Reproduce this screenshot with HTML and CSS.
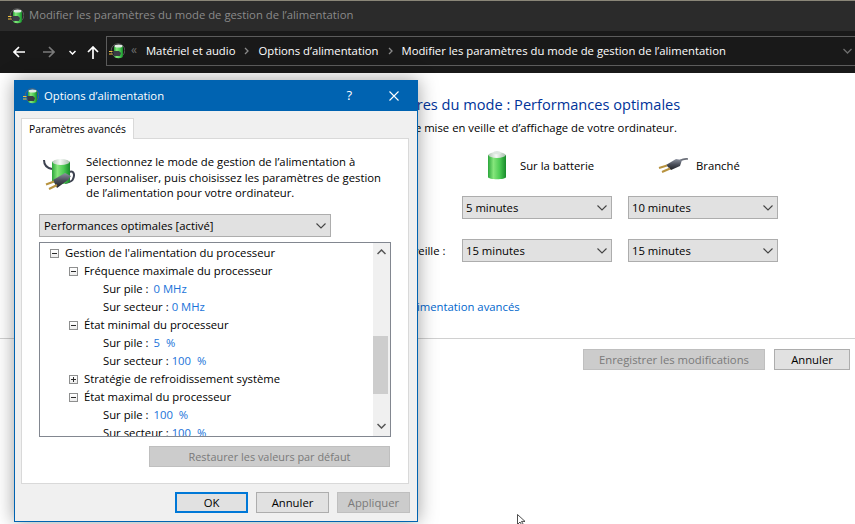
FILE: index.html
```html
<!DOCTYPE html>
<html lang="fr">
<head>
<meta charset="utf-8">
<title>Options d'alimentation</title>
<link rel="stylesheet" href="styles.css">
</head>
<body>
<svg class="defs" width="0" height="0" aria-hidden="true">
  <defs>
    <linearGradient id="cell" x1="0" x2="1" y1="0" y2="0">
      <stop offset="0" stop-color="#2aa63a"/><stop offset=".3" stop-color="#86e67c"/><stop offset=".65" stop-color="#4ccb54"/><stop offset="1" stop-color="#178a2a"/>
    </linearGradient>
    <linearGradient id="cap" x1="0" x2="1" y1="0" y2="0">
      <stop offset="0" stop-color="#b4c8b8"/><stop offset=".45" stop-color="#f6f9f6"/><stop offset="1" stop-color="#a9bfae"/>
    </linearGradient>
    <linearGradient id="plugbody" x1="0" x2="0" y1="0" y2="1">
      <stop offset="0" stop-color="#8d93a0"/><stop offset=".5" stop-color="#4a4e59"/><stop offset="1" stop-color="#1f2026"/>
    </linearGradient>
    <symbol id="battery" viewBox="0 0 20 30">
      <path d="M1 5.500C1 3 19 3 19 5.500V27c0 3-18 3-18 0z" fill="url(#cell)"/>
      <ellipse cx="10" cy="5" rx="8.500" ry="3" fill="url(#cap)"/>
      <path d="M6 3.200c0-3 8-3 8 0 0 1.400-8 1.400-8 0z" fill="#dfe7e1"/>
    </symbol>
    <symbol id="plug" viewBox="0 0 30 16">
      <path d="M22 3.500C25 2 27 1.500 30 2" fill="none" stroke="#6a6e78" stroke-width="1.700"/>
      <path d="M8 8 18 2 24 3 22 9 13 13z" fill="url(#plugbody)"/>
      <path d="M9 8.500 1 11" stroke="#b8933f" stroke-width="2"/>
      <path d="M12 11.500 4 15" stroke="#b8933f" stroke-width="2"/>
    </symbol>
    <symbol id="batteryplug" viewBox="0 0 32 34">
      <path d="M1 3c0 5 3 8 8 9" fill="none" stroke="#3d4250" stroke-width="2"/>
      <path d="M26 15c5-2 6 3 4 7-1 3-4 3-8 4" fill="none" stroke="#3d4250" stroke-width="2"/>
      <path d="M9 5.500C9 2 27 2 27 5.500V24c0 4-18 4-18 0z" fill="url(#cell)"/>
      <ellipse cx="18" cy="5" rx="8.500" ry="3" fill="url(#cap)"/>
      <path d="M10 23 22 16 28 19 25 23 14 31z" fill="url(#plugbody)"/>
      <path d="M11 24.500 3 27.500" stroke="#b8933f" stroke-width="2"/>
      <path d="M14 28 6 32" stroke="#b8933f" stroke-width="2"/>
    </symbol>
    <symbol id="smallicon" viewBox="0 0 16 16">
      <circle cx="9" cy="7.500" r="6.800" fill="none" stroke="#666" stroke-width=".8"/>
      <path d="M5 4C5 2 14 2 14 4V13c0 3-9 3-9 0z" fill="url(#cell)"/>
      <ellipse cx="9.500" cy="3" rx="4" ry="1.500" fill="#e4ece6"/>
      <path d="M4 8h6l2 2-1 3H5z" fill="#3b3d45"/>
      <path d="M0 8.500h3.500M0 11h3.500" stroke="#f0c040" stroke-width="1.100"/>
    </symbol>
  </defs>
</svg>

<div class="window">
  <header class="titlebar">
    <svg class="icon16"><use href="#smallicon"/></svg>
    <span class="titlebar-text">Modifier les paramètres du mode de gestion de l’alimentation</span>
  </header>
  <nav class="navbar">
    <div class="navbtns">
      <svg class="nav-back" width="12" height="12" viewBox="0 0 12 12"><path d="M6 1 1 6l5 5M1 6h11" fill="none" stroke="#fff" stroke-width="1.700"/></svg>
      <svg class="nav-fwd" width="12" height="12" viewBox="0 0 12 12"><path d="M6 1l5 5-5 5M11 6H0" fill="none" stroke="#7a7a7a" stroke-width="1.700"/></svg>
      <svg class="nav-drop" width="7" height="5" viewBox="0 0 7 5"><path d="M.5 1 3.500 4l3-3" fill="none" stroke="#fff" stroke-width="1.500"/></svg>
      <svg class="nav-up" width="12" height="13" viewBox="0 0 12 13"><path d="M1 6l5-5 5 5M6 1v12" fill="none" stroke="#fff" stroke-width="1.700"/></svg>
    </div>
    <div class="addressbox">
      <svg class="icon16"><use href="#smallicon"/></svg>
      <span class="crumb-more">«</span>
      <span class="crumb">Matériel et audio</span>
      <svg class="crumb-sep" width="5" height="8" viewBox="0 0 5 8"><path d="M1 1l3 3-3 3" fill="none" stroke="#8a8a8a" stroke-width="1.300"/></svg>
      <span class="crumb">Options d’alimentation</span>
      <svg class="crumb-sep" width="5" height="8" viewBox="0 0 5 8"><path d="M1 1l3 3-3 3" fill="none" stroke="#8a8a8a" stroke-width="1.300"/></svg>
      <span class="crumb">Modifier les paramètres du mode de gestion de l’alimentation</span>
      <svg class="address-drop" width="9" height="6" viewBox="0 0 9 6"><path d="M.5 1 4.500 5l4-4" fill="none" stroke="#6e6e6e" stroke-width="1.300"/></svg>
    </div>
  </nav>

  <main class="page">
    <div class="plan">
      <h1 class="plan-title">Modifier les paramètres du mode : Performances optimales</h1>
      <p class="plan-sub">Choisissez les paramètres de mise en veille et d’affichage de votre ordinateur.</p>
      <div class="plan-grid">
        <div class="grid-head"></div>
        <div class="grid-head head-battery"><svg class="img-battery"><use href="#battery"/></svg><span>Sur la batterie</span></div>
        <div class="grid-head head-plug"><svg class="img-plug"><use href="#plug"/></svg><span>Branché</span></div>
        <div class="grid-label">Éteindre l’écran :</div>
        <div class="combo"><span>5 minutes</span><svg class="chev" width="10" height="6" viewBox="0 0 10 6"><path d="M.5.5 5 5 9.500.5" fill="none" stroke="#444" stroke-width="1.100"/></svg></div>
        <div class="combo"><span>10 minutes</span><svg class="chev" width="10" height="6" viewBox="0 0 10 6"><path d="M.5.5 5 5 9.500.5" fill="none" stroke="#444" stroke-width="1.100"/></svg></div>
        <div class="grid-label">Mettre l’ordinateur en veille :</div>
        <div class="combo"><span>15 minutes</span><svg class="chev" width="10" height="6" viewBox="0 0 10 6"><path d="M.5.5 5 5 9.500.5" fill="none" stroke="#444" stroke-width="1.100"/></svg></div>
        <div class="combo"><span>15 minutes</span><svg class="chev" width="10" height="6" viewBox="0 0 10 6"><path d="M.5.5 5 5 9.500.5" fill="none" stroke="#444" stroke-width="1.100"/></svg></div>
      </div>
      <a class="plan-link">Modifier les paramètres d’alimentation avancés</a>
    </div>
    <footer class="page-foot">
      <button class="btn btn-disabled btn-save">Enregistrer les modifications</button>
      <button class="btn btn-cancel">Annuler</button>
    </footer>
  </main>
</div>

<section class="dialog">
  <header class="dialog-title">
    <svg class="icon16"><use href="#smallicon"/></svg>
    <span class="dialog-title-text">Options d’alimentation</span>
    <span class="dialog-help">?</span>
    <svg class="dialog-close" width="10" height="10" viewBox="0 0 10 10"><path d="M.5.500l9 9M9.500.5l-9 9" stroke="#fff" stroke-width="1.100"/></svg>
  </header>
  <div class="dialog-body">
    <div class="tab">Paramètres avancés</div>
    <div class="tabpanel">
      <div class="intro">
        <svg class="img-batteryplug"><use href="#batteryplug"/></svg>
        <p class="intro-text">Sélectionnez le mode de gestion de l’alimentation à personnaliser, puis choisissez les paramètres de gestion de l’alimentation pour votre ordinateur.</p>
      </div>
      <div class="combo combo-plan"><span>Performances optimales [activé]</span><svg class="chev" width="10" height="6" viewBox="0 0 10 6"><path d="M.5.5 5 5 9.500.5" fill="none" stroke="#444" stroke-width="1.100"/></svg></div>
      <div class="tree">
        <div class="tree-rows">
          <div class="row lv0"><i class="exp minus"></i>Gestion de l'alimentation du processeur</div>
          <div class="row lv1"><i class="exp minus"></i>Fréquence maximale du processeur</div>
          <div class="row lv2">Sur pile :<b>0 MHz</b></div>
          <div class="row lv2 sec">Sur secteur :<b>0 MHz</b></div>
          <div class="row lv1"><i class="exp minus"></i>État minimal du processeur</div>
          <div class="row lv2">Sur pile :<b>5 &nbsp;%</b></div>
          <div class="row lv2 sec">Sur secteur :<b>100 &nbsp;%</b></div>
          <div class="row lv1"><i class="exp plus"></i>Stratégie de refroidissement système</div>
          <div class="row lv1"><i class="exp minus"></i>État maximal du processeur</div>
          <div class="row lv2">Sur pile :<b>100 &nbsp;%</b></div>
          <div class="row lv2 sec">Sur secteur :<b>100 &nbsp;%</b></div>
        </div>
        <div class="scrollbar">
          <svg class="sb-arrow" width="9" height="6" viewBox="0 0 9 6"><path d="M.5 5 4.500 1l4 4" fill="none" stroke="#555" stroke-width="1.500"/></svg>
          <div class="sb-thumb"></div>
          <svg class="sb-arrow sb-arrow-down" width="9" height="6" viewBox="0 0 9 6"><path d="M.5 1 4.500 5l4-4" fill="none" stroke="#555" stroke-width="1.500"/></svg>
        </div>
      </div>
      <div class="restore-row"><button class="btn btn-disabled btn-restore">Restaurer les valeurs par défaut</button></div>
    </div>
    <div class="dialog-actions">
      <button class="btn btn-default">OK</button>
      <button class="btn">Annuler</button>
      <button class="btn btn-disabled">Appliquer</button>
    </div>
  </div>
</section>

<svg class="cursor" width="12" height="12" viewBox="0 0 12 12"><path d="M.5.500V10.500l2.500-2.500 2 3.500 1.500-.8-2-3.300h3.500z" fill="#fff" stroke="#222" stroke-width=".8"/></svg>
</body>
</html>
```

FILE: styles.css
```css
* { box-sizing: border-box; }
html, body { margin: 0; height: 100%; }
body {
  width: 855px;
  height: 524px;
  overflow: hidden;
  position: relative;
  background: #fff;
  font-family: "Open Sans", "Noto Sans", "Liberation Sans", sans-serif;
  font-size: 11.3px;
  color: #000;
}
.defs { position: absolute; }
.window { display: flex; flex-direction: column; height: 100%; border-top: 1px solid #8a8678; }
.icon16 { width: 16px; height: 16px; flex: none; }

.titlebar { height: 30px; background: #2b2b2b; display: flex; align-items: center; padding-left: 8px; gap: 5px; flex: none; }
.titlebar-text { color: #8a8a8a; margin-bottom: 3px; }

.navbar { height: 42px; background: #191919; display: flex; align-items: center; flex: none; }
.navbtns { width: 106px; flex: none; height: 100%; display: flex; align-items: center; padding-left: 13px; }
.nav-fwd { margin-left: 18px; }
.nav-drop { margin-left: 14px; }
.nav-up { margin-left: 11px; }
.addressbox {
  flex: 1;
  height: 30px;
  margin-top: -3px;
  border: 1px solid #5c5c5c;
  border-right: 0;
  display: flex;
  align-items: center;
  padding-left: 2px;
  color: #fff;
}
.crumb-more { color: #6e6e6e; margin: 0 9px 2px 6px; font-size: 12px; }
.crumb-sep { margin: 0 9px; }
.address-drop { margin-left: auto; margin-right: 3px; }

.page { flex: 1; display: flex; flex-direction: column; background: #fff; }
.plan { height: 266px; border-bottom: 1px solid #d0d0d0; padding-left: 150px; flex: none; }
.plan-title { margin: 20px 0 0 125px; font-size: 14.6px; font-weight: 400; color: #003399; line-height: 22px; white-space: nowrap; }
.plan-sub { margin: 5px 0 0 119px; line-height: 16px; color: #000; white-space: nowrap; }
.plan-grid { display: grid; grid-template-columns: 296px 150px 150px; column-gap: 16px; margin-top: 18px; grid-template-rows: 22px 23px 23px; row-gap: 20px; }
.grid-head { display: flex; align-items: center; }
.grid-label { line-height: 23px; padding-left: 144px; white-space: nowrap; }
.head-battery { padding-left: 25px; gap: 13px; }
.head-plug { padding-left: 30px; gap: 8px; }
.img-battery { width: 20px; height: 30px; flex: none; }
.img-plug { width: 30px; height: 16px; flex: none; }
.combo {
  height: 23px;
  background: #e1e1e1;
  border: 1px solid #adadad;
  display: flex;
  align-items: center;
  justify-content: space-between;
  padding: 0 4px 0 3px;
}
.chev { flex: none; }
.plan-link { display: block; margin-top: 37px; padding-left: 120px; color: #0066cc; white-space: nowrap; line-height: 16px; }

.page-foot { display: flex; justify-content: flex-end; gap: 9px; padding: 10px 5px 0 0; }
.btn {
  width: 73px;
  height: 21px;
  padding: 0;
  background: #e1e1e1;
  border: 1px solid #adadad;
  font: inherit;
  color: #000;
  flex: none;
}
.btn-disabled { background: #cccccc; border-color: #bfbfbf; color: #7a7a7a; }
.btn-save { width: 182px; }
.btn-cancel { width: 76px; }
.btn-restore { width: 241px; font-size: 10.9px; }
.btn-default { border: 2px solid #0078d7; }

.dialog {
  position: absolute;
  left: 14px;
  top: 80px;
  width: 404px;
  height: 442px;
  border: 1px solid #0063b1;
  background: #f0f0f0;
  box-shadow: 0 0 18px rgba(0, 0, 0, .38);
  display: flex;
  flex-direction: column;
}
.dialog-title { height: 30px; background: #0063b1; color: #fff; display: flex; align-items: center; padding-left: 8px; flex: none; }
.dialog-title-text { margin: 0 0 2px 5px; flex: 1; }
.dialog-help { margin: 0 37px 2px 0; font-size: 13px; }
.dialog-close { margin-right: 18px; }
.dialog-body { flex: 1; padding: 7px 6px 0; display: flex; flex-direction: column; align-items: flex-start; }
.tab { height: 21px; width: 113px; margin-bottom: -1px; background: #fff; border: 1px solid #d9d9d9; border-bottom: 0; text-align: center; line-height: 20px; position: relative; white-space: nowrap; font-size: 10.3px; }
.tabpanel { width: 388px; height: 346px; background: #fff; border: 1px solid #d9d9d9; padding: 0 0 0 17px; display: flex; flex-direction: column; }
.intro { display: flex; padding: 15px 0 0 4px; height: 75px; flex: none; }
.img-batteryplug { width: 32px; height: 34px; margin-top: 3px; flex: none; }
.intro-text { margin: 0 0 0 11px; line-height: 15.5px; width: 298px; }
.combo-plan { width: 292px; flex: none; padding-left: 4px; }
.tree { width: 352px; height: 195px; margin-top: 5px; border: 1px solid #828790; background: #fff; display: flex; flex: none; overflow: hidden; }
.tree-rows { flex: 1; min-width: 0; overflow: hidden; padding-top: 1px; }
.row { height: 18px; line-height: 18px; display: flex; align-items: center; white-space: nowrap; }
.row b { font-weight: 400; color: #1a73d9; margin-left: 5px; }
.sec b { margin-left: 3px; }
.lv0 { padding-left: 10px; }
.lv1 { padding-left: 29px; }
.lv2 { padding-left: 63px; }
.exp { width: 9px; height: 9px; border: 1px solid #8e8f8f; background: linear-gradient(#fff, #ececec); flex: none; margin-right: 6px; position: relative; }
.exp::before { content: ""; position: absolute; left: 1px; top: 3px; width: 5px; height: 1px; background: #2a2a2a; }
.plus::after { content: ""; position: absolute; left: 3px; top: 1px; width: 1px; height: 5px; background: #2a2a2a; }
.scrollbar { width: 17px; background: #f0f0f0; flex: none; display: flex; flex-direction: column; align-items: center; padding-top: 6px; position: relative; }
.sb-thumb { position: absolute; left: 0; top: 93px; width: 15px; height: 58px; background: #cdcdcd; }
.sb-arrow-down { position: absolute; top: 180px; }
.restore-row { width: 351px; display: flex; justify-content: flex-end; margin-top: 9px; }
.dialog-actions { display: flex; gap: 8px; width: 100%; justify-content: flex-end; padding: 8px 1px 0 0; }
.cursor { position: absolute; left: 517px; top: 514px; }
```
